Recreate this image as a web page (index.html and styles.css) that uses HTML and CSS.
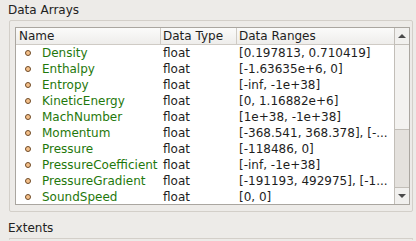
FILE: index.html
```html
<!DOCTYPE html>
<html lang="en">
<head>
    <meta charset="UTF-8">
    <title>Data Arrays</title>
    <link rel="stylesheet" href="styles.css">
</head>
<body>
    <div class="section-title">Data Arrays</div>
    <div class="group">
        <div class="table">
            <div class="table-body">
                <div class="row header">
                    <div class="cell name">Name</div>
                    <div class="cell type">Data Type</div>
                    <div class="cell range">Data Ranges</div>
                </div>
                <div class="row"><div class="cell name"><span class="dot"></span><span class="array">Density</span></div><div class="cell type">float</div><div class="cell range">[0.197813, 0.710419]</div></div>
                <div class="row"><div class="cell name"><span class="dot"></span><span class="array">Enthalpy</span></div><div class="cell type">float</div><div class="cell range">[-1.63635e+6, 0]</div></div>
                <div class="row"><div class="cell name"><span class="dot"></span><span class="array">Entropy</span></div><div class="cell type">float</div><div class="cell range">[-inf, -1e+38]</div></div>
                <div class="row"><div class="cell name"><span class="dot"></span><span class="array">KineticEnergy</span></div><div class="cell type">float</div><div class="cell range">[0, 1.16882e+6]</div></div>
                <div class="row"><div class="cell name"><span class="dot"></span><span class="array">MachNumber</span></div><div class="cell type">float</div><div class="cell range">[1e+38, -1e+38]</div></div>
                <div class="row"><div class="cell name"><span class="dot"></span><span class="array">Momentum</span></div><div class="cell type">float</div><div class="cell range">[-368.541, 368.378], [-...</div></div>
                <div class="row"><div class="cell name"><span class="dot"></span><span class="array">Pressure</span></div><div class="cell type">float</div><div class="cell range">[-118486, 0]</div></div>
                <div class="row"><div class="cell name"><span class="dot"></span><span class="array">PressureCoefficient</span></div><div class="cell type">float</div><div class="cell range">[-inf, -1e+38]</div></div>
                <div class="row"><div class="cell name"><span class="dot"></span><span class="array">PressureGradient</span></div><div class="cell type">float</div><div class="cell range">[-191193, 492975], [-1...</div></div>
                <div class="row"><div class="cell name"><span class="dot"></span><span class="array">SoundSpeed</span></div><div class="cell type">float</div><div class="cell range">[0, 0]</div></div>
            </div>
            <div class="scrollbar">
                <div class="scroll-btn"><span class="arrow up"></span></div>
                <div class="slider"></div>
                <div class="track"></div>
                <div class="scroll-btn down"><span class="arrow dn"></span></div>
            </div>
        </div>
    </div>
    <div class="section-title second">Extents</div>
    <div class="group next"></div>
</body>
</html>
```

FILE: styles.css
```css
body {
    margin: 0;
    background: #edebe8;
    font-family: "DejaVu Sans", sans-serif;
    font-size: 12px;
    color: #1e1e1e;
    width: 416px;
    height: 241px;
    overflow: hidden;
}
.section-title {
    height: 20px;
    line-height: 20px;
    padding-left: 8px;
    color: #222;
}
.section-title.second {
    margin-top: 7px;
    height: 19px;
    line-height: 18px;
}
.group {
    margin: 0 3px 0 9px;
    border: 1px solid #d3cfc9;
    border-radius: 2px;
    padding: 6px 2px 6px 5px;
}
.group.next {
    height: 1px;
    padding: 0;
    border-bottom: none;
}
.table {
    display: flex;
    border: 1px solid #aaa6a0;
    background: #fff;
    height: 176px;
}
.table-body {
    flex: 1;
    overflow: hidden;
}
.row {
    display: flex;
    height: 16px;
    line-height: 16px;
    white-space: nowrap;
}
.row.header {
    background: linear-gradient(#fbfbfa, #eeedeb);
    border-bottom: 1px solid #cfcbc5;
}
.cell {
    overflow: hidden;
}
.name {
    width: 144px;
    display: flex;
    align-items: center;
}
.type {
    width: 73px;
    padding-left: 3px;
}
.range {
    flex: 1;
    padding-left: 3px;
}
.header .name {
    padding-left: 3px;
    width: 141px;
}
.header .type,
.header .range {
    border-left: 1px solid #cfcbc5;
    padding-left: 2px;
}
.dot {
    width: 4px;
    height: 4px;
    margin-left: 9px;
    margin-right: 11px;
    border: 1px solid #6e4a26;
    border-radius: 50%;
    background: #f5c08a;
    flex: none;
}
.array {
    color: #1f780c;
}
.scrollbar {
    width: 14px;
    border-left: 1px solid #c2beb8;
    display: flex;
    flex-direction: column;
    background: #e4e1dd;
}
.scroll-btn {
    height: 16px;
    background: #f1f0ee;
    border-bottom: 1px solid #c2beb8;
    display: flex;
    align-items: center;
    justify-content: center;
}
.scroll-btn.down {
    border-bottom: none;
    border-top: 1px solid #c2beb8;
}
.slider {
    height: 84px;
    background: #f3f2f0;
    border-bottom: 1px solid #c2beb8;
}
.track {
    flex: 1;
}
.arrow {
    width: 0;
    height: 0;
    border-left: 4px solid transparent;
    border-right: 4px solid transparent;
}
.arrow.up {
    border-bottom: 4px solid #4a4a4a;
}
.arrow.dn {
    border-top: 4px solid #4a4a4a;
}
```
